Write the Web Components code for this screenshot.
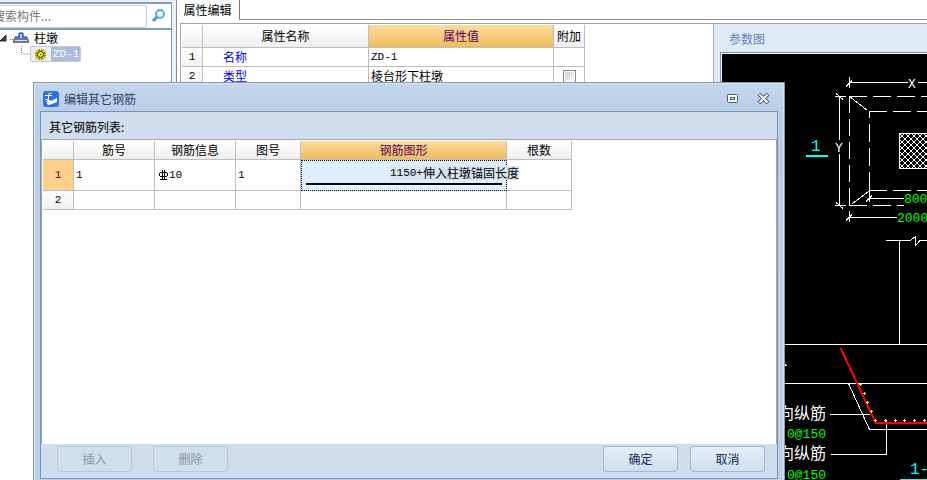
<!DOCTYPE html>
<html lang="zh-CN">
<head>
<meta charset="utf-8">
<title>属性编辑</title>
<style>
html,body{height:100%}
body{margin:0;overflow:hidden;background:#eef1f6;color:#000;font:12px/16px "Noto Sans CJK SC",sans-serif;--mono:"Liberation Mono",monospace}
</style>
</head>
<body>
<app-window>
  <component-tree slot="side"></component-tree>
  <property-table slot="table"></property-table>
  <param-drawing slot="drawing"></param-drawing>
  <rebar-dialog slot="dialog" heading="编辑其它钢筋">
    <rebar-table></rebar-table>
    <dialog-button slot="left" disabled>插入</dialog-button>
    <dialog-button slot="left" disabled>删除</dialog-button>
    <dialog-button slot="right">确定</dialog-button>
    <dialog-button slot="right">取消</dialog-button>
  </rebar-dialog>
</app-window>
<script>
const define = (name, html, setup) => customElements.define(name, class extends HTMLElement {
  connectedCallback() {
    if (this.shadowRoot) return;
    this.attachShadow({mode: 'open'}).innerHTML = html;
    if (setup) setup(this, this.shadowRoot);
  }
});

const tableCss = `
table{border-collapse:separate;border-spacing:0;table-layout:fixed;background:#fff}
th,td{box-sizing:border-box;padding:0 2px;border-right:1px solid #bebebe;border-bottom:1px solid #bebebe;font-weight:400;white-space:nowrap;line-height:16px}
th{text-align:center;background:linear-gradient(#fff,#efefef)}
td{text-align:left}
th.on{color:#5a0060;background:linear-gradient(#fbdba0,#f0bd5b)}
.m{font-family:var(--mono);font-size:11px}`;

define('app-window', `
<style>
:host{display:flex;height:100vh;position:relative;overflow:hidden}
.side{flex:none;width:172px;margin-right:4px;display:flex}
main{flex:1;min-width:0;display:flex;flex-direction:column;background:#fff;border-left:1px solid #8b8b93}
.tabs{display:flex;height:20px}
.tab{font:inherit;background:#fff;border:0;border-right:1px solid #77777f;padding:0 7px 0 6px;line-height:18px;width:63px;white-space:nowrap}
.rest{flex:1;box-sizing:border-box;border-bottom:1px solid #8a8a90}
.body{flex:1;display:flex;margin:3px 0 0 3px;border:1px solid #a3a3aa;border-right:0;border-bottom:0;min-height:0}
.tbl{flex:1;min-width:0;padding-top:1px;overflow:hidden}
.draw{flex:none;width:214px;display:flex}
</style>
<div class="side"><slot name="side"></slot></div>
<main>
  <div class="tabs"><button class="tab">属性编辑</button><div class="rest"></div></div>
  <div class="body"><div class="tbl"><slot name="table"></slot></div><div class="draw"><slot name="drawing"></slot></div></div>
</main>
<slot name="dialog"></slot>`);

define('component-tree', `
<style>
:host{flex:1;min-width:0;display:flex;flex-direction:column;padding-top:2px;overflow:hidden}
.search{display:flex;height:24px;margin-left:-12px;border:2px solid #7e9bc6;border-width:2px 1px 1px;background:#fff}
input{flex:1;min-width:0;font:inherit;border:1px solid #c6d0e0;border-radius:2px;padding:0 3px 2px;outline:0;background:#fff;margin:1px 0 0}
input::placeholder{color:#777;opacity:1}
.go{width:24px;border:0;background:none;padding:0;display:grid;place-items:center}
.tree{flex:1;background:#fff;border:1px solid #7e9bc6;border-left:0;border-bottom:0}
.row{display:flex;align-items:center;height:16px}
.root svg{display:block}
.root span{padding-left:4px}
.leaf span{display:flex;align-items:center;height:14px;border:1px solid #c4c8d0;border-radius:2px;background:#eee}
.leaf b{font:11px/14px var(--mono);color:#fff;background:#a9bcdc;padding:0 1px 0 2px;margin-left:4px;white-space:nowrap}
.leaf span svg{margin-left:3px}
</style>
<div class="search"><input type="search" placeholder="搜索构件..." aria-label="搜索构件"><button class="go" aria-label="搜索"><svg width="16" height="16" viewBox="0 0 16 16" fill="none"><circle cx="9" cy="6" r="4" fill="#e8f6ff" stroke="#5aa9e4" stroke-width="2"/><path d="M6 9 2 13" stroke="#4b93dc" stroke-width="3"/></svg></button></div>
<div class="tree">
  <div class="row root"><svg width="30" height="16" viewBox="0 0 30 16"><path d="M0 11 6 5V11Z" fill="#444" stroke="#222"/><path d="M10 9.500h3" stroke="#777" stroke-dasharray="1 1"/><path d="M19 3h4v4h4v3H15V7h4Z" fill="#4c83d8" stroke="#153f93"/><path d="M20 4h2v4h-2Z" fill="#a9d0ff"/><path d="M13 9h16v4H13Z" fill="#737a83"/><path d="M15 10h12v1H15Z" fill="#ddd"/></svg><span>柱墩</span></div>
  <div class="row leaf"><svg width="30" height="16"><path d="M21.500 0v8H30" fill="none" stroke="#777" stroke-dasharray="1 1"/></svg><span><svg width="13" height="13" viewBox="0 0 13 13"><g stroke="#222" stroke-width="3"><path d="M6.500 1v11M1 6.500h11M2.500 2.500l8 8M10.500 2.500l-8 8"/></g><g stroke="#ffec00" stroke-width="2"><path d="M6.500 1v11M1 6.500h11M2.500 2.500l8 8M10.500 2.500l-8 8"/></g><circle cx="6.500" cy="6.500" r="3" fill="#ffec00" stroke="#222"/><path d="M6 6h1v1H6Z"/></svg><b>ZD-1</b></span></div>
</div>`);

define('property-table', `
<style>:host{display:block}${tableCss}
table{width:403px;margin-left:1px}
thead th{height:23px}
tbody tr{height:19px}
tbody th{background:linear-gradient(#fdfdfd,#f2f2f2)}
td.n{color:#0000f0;padding-left:20px}
td.c{text-align:center}
input{appearance:none;display:block;box-sizing:border-box;width:13px;height:13px;margin:1px auto 0;border:1px solid #8b8b8b;box-shadow:inset 0 0 0 1px #fff;background:linear-gradient(135deg,#c7ccd5,#fff)}
</style>
<table>
<colgroup><col style="width:21px"><col style="width:166px"><col style="width:185px"><col style="width:31px"></colgroup>
<thead><tr><th></th><th>属性名称</th><th class="on">属性值</th><th>附加</th></tr></thead>
<tbody><tr><th class="m">1</th><td class="n">名称</td><td class="m">ZD-1</td><td></td></tr>
<tr><th class="m">2</th><td class="n">类型</td><td>棱台形下柱墩</td><td class="c"><input type="checkbox" aria-label="附加"></td></tr></tbody>
</table>`);

define('param-drawing', `
<style>
:host{flex:1;min-width:0;display:flex;flex-direction:column;background:#dfebf7;border-left:1px solid #9db0c8}
h2{margin:0;padding:7px 0 0 15px;height:21px;font-size:12px;font-weight:400;line-height:16px;color:#6383b3}
.view{flex:1;margin-left:6px;border:1px solid #6d8fb8;border-width:1px 0 0 1px;background:#fff;padding:1px 0 0 1px;min-height:0;display:flex}
svg{flex:1;min-width:0;height:100%;background:#000}
text{font-family:"Liberation Mono",monospace;font-size:13px}
.k{font-family:"Noto Sans CJK SC",sans-serif;font-size:16px;fill:#fff}
.g{fill:#0f0}.c{fill:#0ff;font-size:16px}.w{fill:#fff}
</style>
<h2>参数图</h2>
<div class="view"><svg role="img" aria-label="柱墩参数图">
<defs><pattern id="h" width="6" height="6" patternUnits="userSpaceOnUse" x="899" y="133"><path d="M0 0 6 6M6 0 0 6" stroke="#fff" fill="none"/></pattern></defs>
<g transform="translate(-722 -54)" fill="none" stroke="#fff" shape-rendering="crispEdges">
<path d="M849.500 77V88M846 86.500l6-6M849 82.500H908M918 82.500H940"/>
<path d="M835 96.500H846M835 205.500H846M839.500 96V140M839.500 154V206M836 93.500l7 6M836 202.500l7 6"/>
<path d="M849 96.500H940" stroke-dasharray="18 6"/>
<path d="M849.500 96V205" stroke-dasharray="17 6"/>
<path d="M849 205.500H904" stroke-dasharray="18 6"/>
<path d="M869 111.500H940" stroke-dasharray="18 6"/>
<path d="M869 190.500H940" stroke-dasharray="18 6"/>
<path d="M869.500 111V191" stroke-dasharray="18 6" stroke-dashoffset="11"/>
<path d="M849.500 96.500 867.500 110.500M852 204 869 191"/>
<path d="M899.500 133.500H940V168.500H899.500Z" fill="url(#h)"/>
<path d="M869.500 191V202M866 201.500l6-6M869 198.500H904M849.500 211V222M846 220.500l6-6M849 217.500H897"/>
<path d="M886 240.500H910L915.500 236.500V245.500L920 240.500H940M899.500 240V344M780 344.500H940M780 383.500H940M780 361l7 5"/>
<path d="M848.500 383.500 869.500 429.500H940M830 414.500H870M831 454.500H886.500V421"/>
<path d="M840.500 348 875.500 422.500H940" stroke="#f00" stroke-width="2"/>
<path d="M806 156H828M900 480H940" stroke="#0ff" stroke-width="2"/>
<g id="dots" stroke="none" fill="#ff0"></g>
<g stroke="none">
<text class="w" x="908" y="88">X</text><text class="w" x="835" y="152">Y</text>
<text class="c" x="811" y="151">1</text>
<text class="g" x="904" y="203">800</text><text class="g" x="897" y="222">2000</text>
<text class="k" x="778" y="419">向纵筋</text><text class="g" x="787" y="438">0@150</text>
<text class="k" x="778" y="459">向纵筋</text><text class="g" x="787" y="479">0@150</text>
<text class="c" x="910" y="474">1-1</text>
</g></g></svg></div>`, (host, root) => {
  const bars = [[860,384],[864,393],[867,402],[871,411],[875,420],[885,420],[895,420],[904,420],[914,420],[924,420]];
  root.getElementById('dots').innerHTML = bars.map(([x, y]) =>
    `<path d="M${x - 1} ${y}h3v1h-3ZM${x} ${y - 1}h1v3h-1Z"/>`).join('');
});

define('rebar-table', `
<style>:host{display:block}${tableCss}
table{width:529px;margin-left:1px}
thead th{height:19px}
tbody th{background:linear-gradient(#fdfdfd,#f0f0f0)}
tr.cur{height:31px}tr.nxt{height:19px}
tr.cur th{background:#fdd08a;color:#5a0060}
td.fig{position:relative;background:#dfeeff;padding:0;border:1px dotted #000}
.note{position:absolute;z-index:1;right:-13px;top:5px;line-height:14px;background:#d8e4f2;display:flex;white-space:nowrap}
.bar{height:2px;background:#000;margin:16px 4px 0}
td svg{vertical-align:-2px;margin:0 1px 0 2px}
</style>
<table>
<colgroup><col style="width:31px"><col style="width:81px"><col style="width:81px"><col style="width:65px"><col style="width:206px"><col style="width:65px"></colgroup>
<thead><tr><th></th><th>筋号</th><th>钢筋信息</th><th>图号</th><th class="on">钢筋图形</th><th>根数</th></tr></thead>
<tbody><tr class="cur"><th class="m">1</th><td class="m">1</td><td class="m"><svg width="9" height="10" viewBox="0 0 9 10" fill="none" stroke="#000" shape-rendering="crispEdges"><path d="M3.500 0V9M5.500 0V9M1 9.500H8M1 2.500H8M.5 3V6M8.500 3V6M1 6.500H8"/></svg>10</td><td class="m">1</td><td class="fig"><div class="note"><span class="m">1150+</span><span>伸入柱墩锚固长度</span></div><div class="bar"></div></td><td></td></tr>
<tr class="nxt"><th class="m">2</th><td></td><td></td><td></td><td></td><td></td></tr></tbody>
</table>`);

define('dialog-button', `
<style>
:host{display:block}
button{box-sizing:border-box;width:75px;height:26px;font:inherit;line-height:16px;padding:0;color:#15294f;border:1px solid #a3b6d2;border-radius:3px;background:linear-gradient(#e4eef8,#cfdff0)}
button:disabled{color:#8796a6;border-color:#b6c9dc;background:#cfdfec}
</style><button><slot></slot></button>`, (host, root) => {
  root.querySelector('button').disabled = host.hasAttribute('disabled');
});

define('rebar-dialog', `
<style>
:host{position:absolute;left:33px;right:142px;top:82px;bottom:0;box-sizing:border-box;display:flex;flex-direction:column;padding:0 6px 1px;border:1px solid #8899ad;border-bottom:0;background:linear-gradient(#c4d6ec,#b9cde6 30px,#bdd0e8);box-shadow:inset 1px 1px #d6e4f4,inset -1px 0 #d6e4f4}
header{display:flex;align-items:center;height:28px;padding:3px 8px 0 3px;box-sizing:border-box}
h1{margin:0 auto 0 5px;font-size:12px;line-height:16px;font-weight:400;color:#2c4468}
header svg{display:block}
header button{border:0;padding:0;background:none;margin-left:19px}
.frame{flex:1;display:flex;flex-direction:column;border:1px solid #7592b8;background:#d0ddee;min-height:0}
.frame p{margin:0;padding:7px 8px 4px;line-height:16px}
.grid{flex:1;min-height:0;background:#fff;border:1px solid #a5a5a8;border-bottom:0;padding-top:1px}
footer{display:flex;align-items:center;justify-content:space-between;height:34px;padding:0 12px 4px 16px;box-sizing:border-box}
footer div{display:flex}
.l{gap:21px}.r{gap:12px}
</style>
<header>
<svg width="16" height="16" viewBox="0 0 16 16"><rect width="16" height="16" rx="3" fill="#2f72df"/><path d="M2 4.500H9M5.500 12V4q0-2 3-2M2 8.500H6M3 11l3-3" stroke="#fff" fill="none" stroke-width="1"/><path d="M4 11 7 9l1 1 6-3v4l-8 3-2-1Z" fill="#fff"/></svg>
<h1></h1>
<button aria-label="最大化"><svg width="11" height="10" viewBox="0 0 11 10"><rect x=".5" y=".5" width="10" height="8" rx="1" fill="#fff" stroke="#475a78"/><rect x="3.500" y="3.500" width="4" height="2" fill="#eee" stroke="#475a78"/></svg></button>
<button aria-label="关闭"><svg width="13" height="11" viewBox="0 0 13 11"><path d="M2 1 11 10M11 1 2 10" stroke="#43536d" stroke-width="4"/><path d="M2.500 1.500 10.500 9.500M10.500 1.500 2.500 9.500" stroke="#fff" stroke-width="2"/></svg></button>
</header>
<div class="frame"><p>其它钢筋列表:</p><div class="grid"><slot></slot></div>
<footer><div class="l"><slot name="left"></slot></div><div class="r"><slot name="right"></slot></div></footer></div>`, (host, root) => {
  root.querySelector('h1').textContent = host.getAttribute('heading');
});
</script>
</body>
</html>
